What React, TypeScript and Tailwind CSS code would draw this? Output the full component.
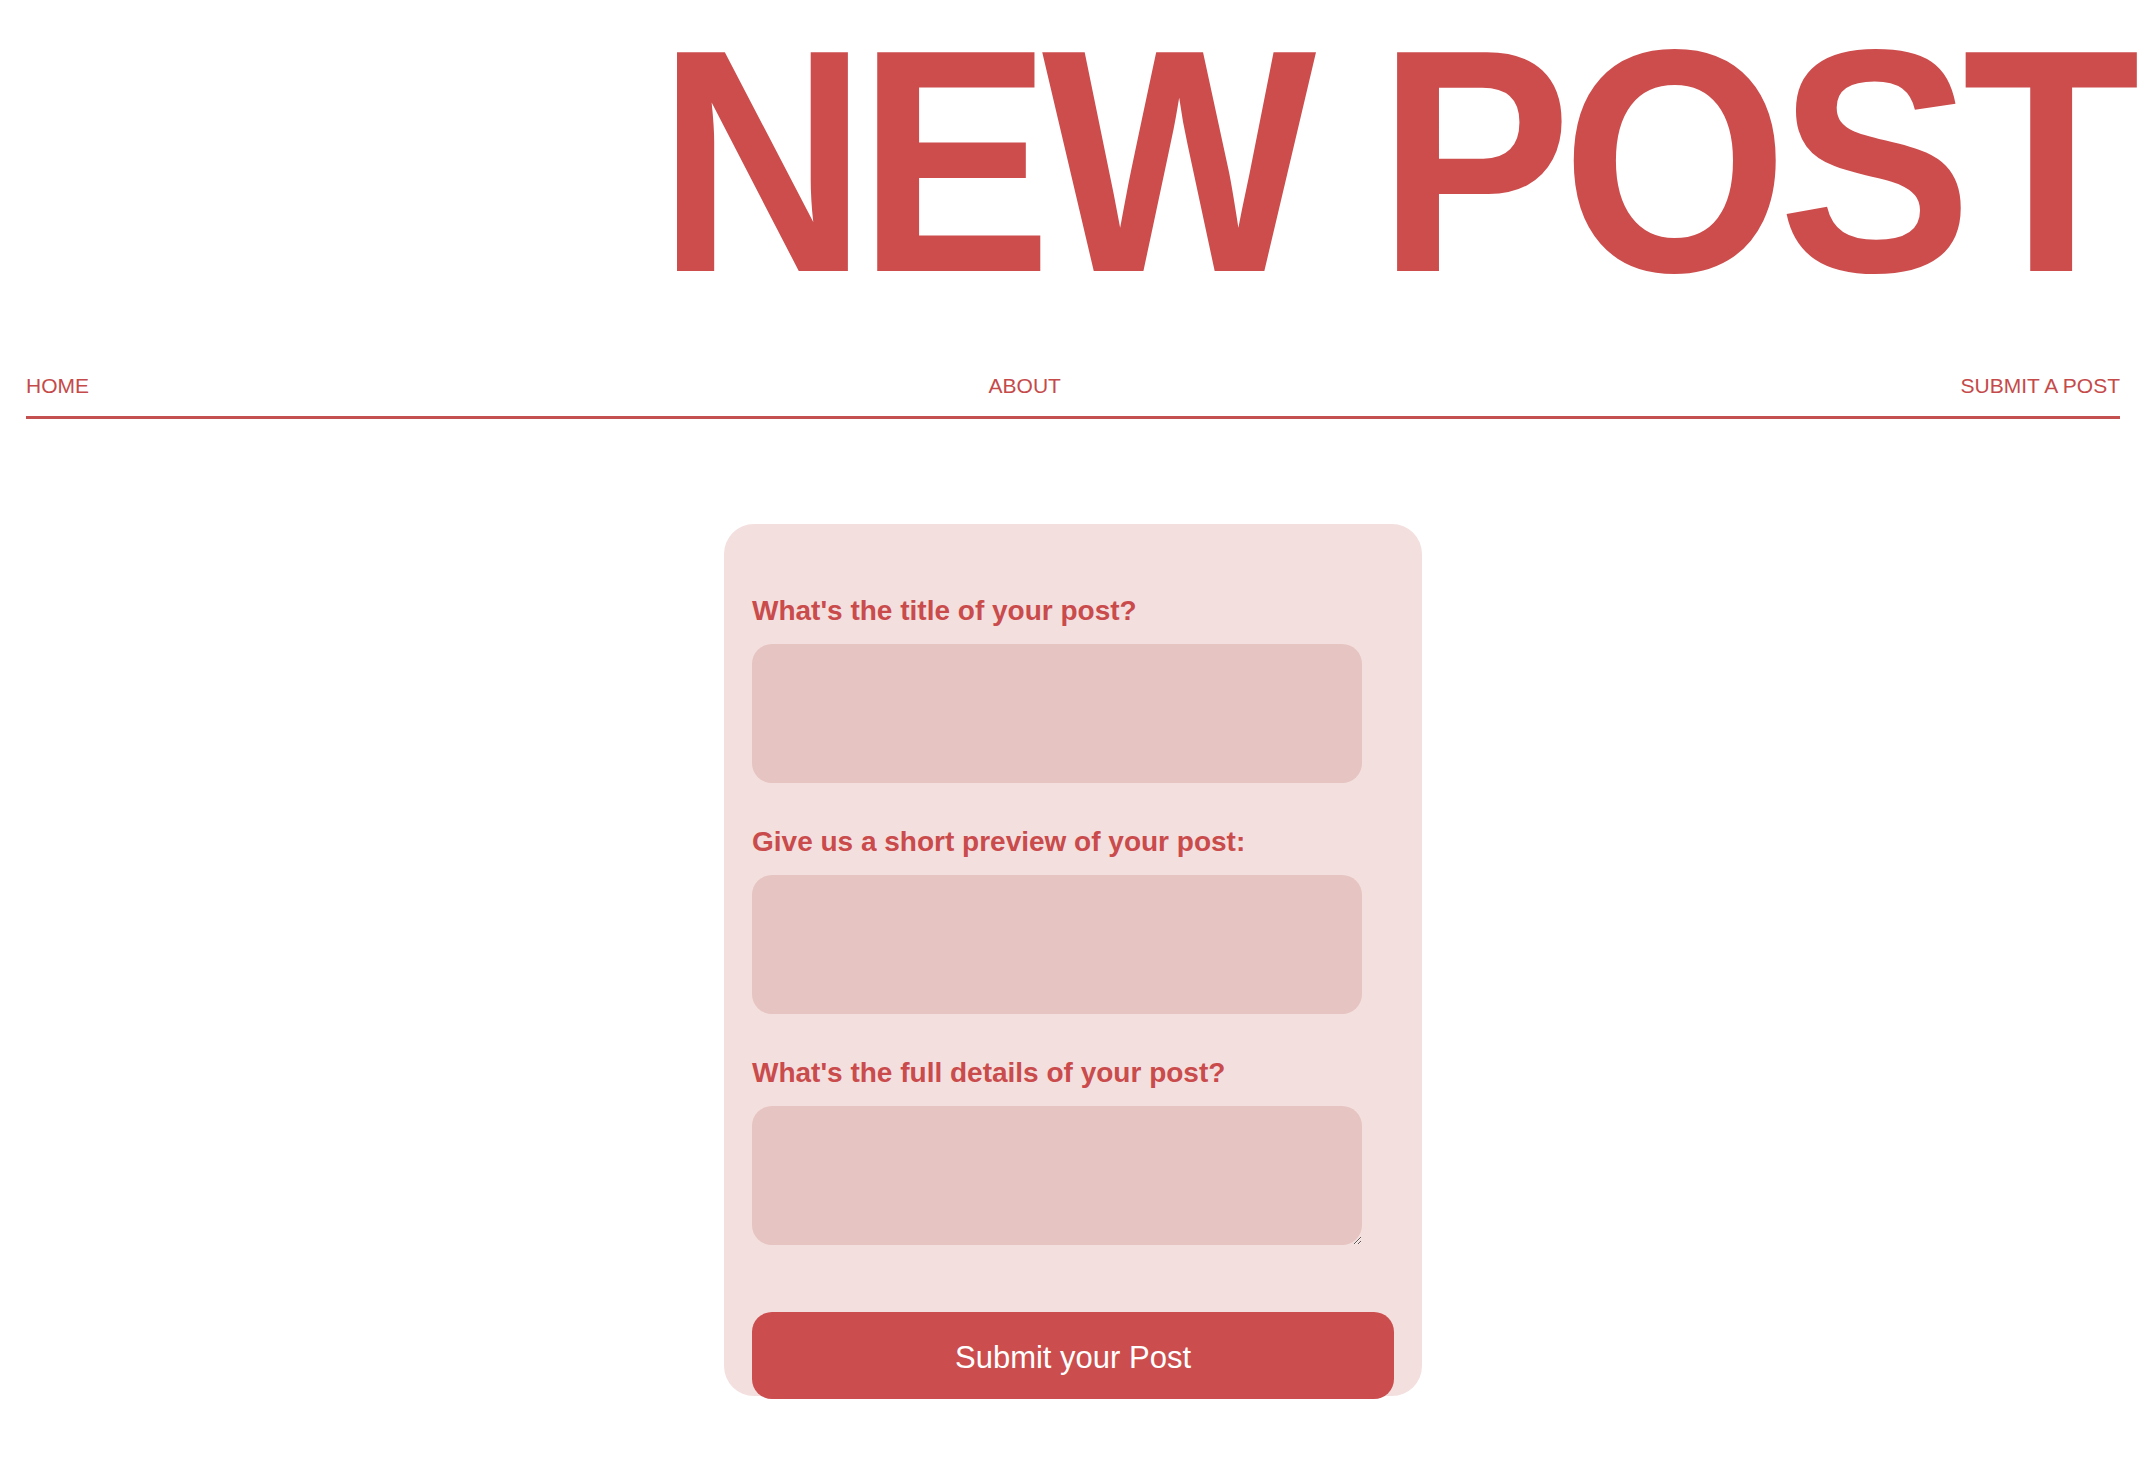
import React from "react";

export default function App() {
  const labelCls =
    "block text-[28px] leading-[32px] font-bold text-[#c94b4b]";
  const fieldCls =
    "block mt-[17px] w-[95%] h-[139px] rounded-[20px] bg-[#e5c4c1] outline-none px-4 text-[20px]";
  return (
    <div className="min-h-screen bg-white font-['Liberation_Sans',Arial,Helvetica,sans-serif]">
      <header className="ml-[26px] mr-[34px] pt-[2px]">
        <h1 className="-mr-[10px] text-right text-[318px] leading-none font-bold whitespace-nowrap text-[#cd4d4d]">
          <span className="inline-block origin-right scale-x-[0.914] tracking-[-10.6px]">
            NEW POST
          </span>
        </h1>
        <nav className="mt-[54px] flex justify-between border-b-[3px] border-[#c4514f] pb-[18px] text-[21px] leading-[24px] text-[#c54a4a]">
          <a href="#">HOME</a>
          <a href="#">ABOUT</a>
          <a href="#">SUBMIT A POST</a>
        </nav>
      </header>
      <main className="mt-[105px] flex justify-center pr-[8px]">
        <form
          className="w-[698px] h-[872px] rounded-[30px] bg-[#f4dfdf] px-[28px] pt-[71px]"
          onSubmit={(e) => e.preventDefault()}
        >
          <label className={labelCls}>What's the title of your post?</label>
          <input type="text" className={fieldCls} />
          <label className={labelCls + " mt-[43px]"}>
            Give us a short preview of your post:
          </label>
          <input type="text" className={fieldCls} />
          <label className={labelCls + " mt-[43px]"}>
            What's the full details of your post?
          </label>
          <textarea className={fieldCls} />
          <button
            type="submit"
            className="mt-[67px] block w-full h-[87px] rounded-[20px] bg-[#cc4d4d] pt-[6px] text-white text-[31px]"
          >
            Submit your Post
          </button>
        </form>
      </main>
    </div>
  );
}
